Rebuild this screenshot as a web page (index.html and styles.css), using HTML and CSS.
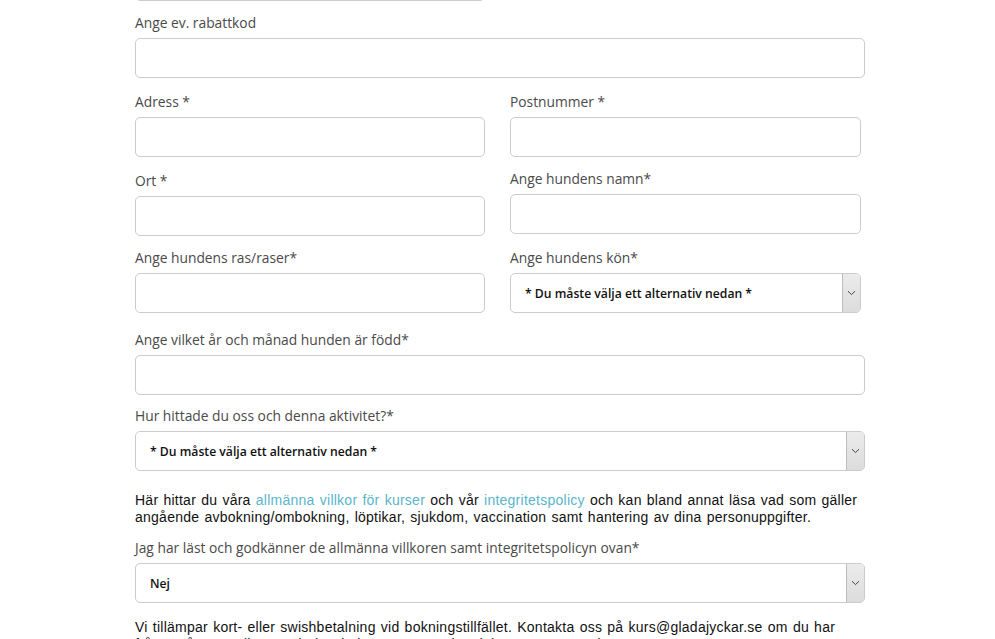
FILE: index.html
```html
<!DOCTYPE html>
<html lang="sv">
<head>
<meta charset="utf-8">
<link rel="stylesheet" href="styles.css">
</head>
<body>
<form class="form">
  <div class="grid">
    <div class="field top-field"><div class="input"></div></div>
    <div class="field top-field"></div>
    <div class="field full">
      <label class="label">Ange ev. rabattkod</label>
      <div class="input"></div>
    </div>
    <div class="field">
      <label class="label">Adress *</label>
      <div class="input"></div>
    </div>
    <div class="field">
      <label class="label">Postnummer *</label>
      <div class="input"></div>
    </div>
    <div class="field">
      <label class="label">Ort *</label>
      <div class="input"></div>
    </div>
    <div class="field shift-up">
      <label class="label">Ange hundens namn*</label>
      <div class="input"></div>
    </div>
    <div class="field shift-up">
      <label class="label">Ange hundens ras/raser*</label>
      <div class="input"></div>
    </div>
    <div class="field shift-up">
      <label class="label">Ange hundens kön*</label>
      <div class="select">
        <span class="select-text">* Du måste välja ett alternativ nedan *</span>
        <span class="select-btn"><svg width="9" height="6" viewBox="0 0 9 6"><path d="M1 1.2 L4.5 4.6 L8 1.2" fill="none" stroke="#444" stroke-width="1"/></svg></span>
      </div>
    </div>
  </div>

  <div class="field wide first-wide">
    <label class="label">Ange vilket år och månad hunden är född*</label>
    <div class="input"></div>
  </div>
  <div class="field wide">
    <label class="label">Hur hittade du oss och denna aktivitet?*</label>
    <div class="select">
      <span class="select-text">* Du måste välja ett alternativ nedan *</span>
      <span class="select-btn"><svg width="9" height="6" viewBox="0 0 9 6"><path d="M1 1.2 L4.5 4.6 L8 1.2" fill="none" stroke="#444" stroke-width="1"/></svg></span>
    </div>
  </div>

  <p class="text text-a">Här hittar du våra <a class="link" href="#">allmänna villkor för kurser</a> och vår <a class="link" href="#">integritetspolicy</a> och kan bland annat läsa vad som gäller angående avbokning/ombokning, löptikar, sjukdom, vaccination samt hantering av dina personuppgifter.</p>

  <div class="field wide">
    <label class="label">Jag har läst och godkänner de allmänna villkoren samt integritetspolicyn ovan*</label>
    <div class="select">
      <span class="select-text">Nej</span>
      <span class="select-btn"><svg width="9" height="6" viewBox="0 0 9 6"><path d="M1 1.2 L4.5 4.6 L8 1.2" fill="none" stroke="#444" stroke-width="1"/></svg></span>
    </div>
  </div>

  <p class="text text-b">Vi tillämpar kort- eller swishbetalning vid bokningstillfället. Kontakta oss på kurs@gladajyckar.se om du har frågor på ovan eller om du har behov av annan betalning än ovan angivna.</p>
</form>
</body>
</html>
```

FILE: styles.css
```css
* { box-sizing: border-box; }
html, body { margin: 0; padding: 0; background: #fff; }
body {
  font-family: "Open Sans", "DejaVu Sans", sans-serif;
  overflow: hidden;
  height: 639px;
}
.form {
  width: 730px;
  margin: -39px 0 0 135px;
}
.grid {
  display: grid;
  grid-template-columns: 350px 351px;
  column-gap: 25px;
  row-gap: 14px;
}
.top-field { margin-bottom: -2px; }
.full { grid-column: 1 / -1; width: 730px; }
.field { display: flex; flex-direction: column; }
.shift-up { margin-top: -2px; }
.label {
  display: block;
  font-size: 13.8px;
  font-weight: 500;
  line-height: 20px;
  color: #4a4a4a;
  margin-bottom: 5px;
}
.input {
  height: 40px;
  border: 1px solid #c9cccf;
  border-radius: 5px;
  background: #fff;
}
.select {
  height: 40px;
  border: 1px solid #c9cccf;
  border-radius: 5px;
  background: #fff;
  display: flex;
  align-items: stretch;
  justify-content: space-between;
  overflow: hidden;
}
.select-text {
  font-size: 12.2px;
  font-weight: 600;
  color: #111;
  padding-left: 14px;
  display: flex;
  align-items: center;
}
.select-btn {
  width: 18px;
  background: linear-gradient(#ebebeb, #dcdcdc);
  border-left: 1px solid #bdbdbd;
  display: flex;
  align-items: center;
  justify-content: center;
}
.wide { width: 730px; }
.first-wide { margin-top: 17px; }
.wide + .wide { margin-top: 11px; }
.text {
  font-family: "Liberation Sans", Arial, sans-serif;
  font-size: 14px;
  letter-spacing: 0.25px;
  word-spacing: 1px;
  line-height: 17px;
  color: #111;
}
.text-a { margin: 21px 0 12px; }
.text-b { margin: 16px 0 0; }
.link { color: #5ab5cc; text-decoration: none; }
```
